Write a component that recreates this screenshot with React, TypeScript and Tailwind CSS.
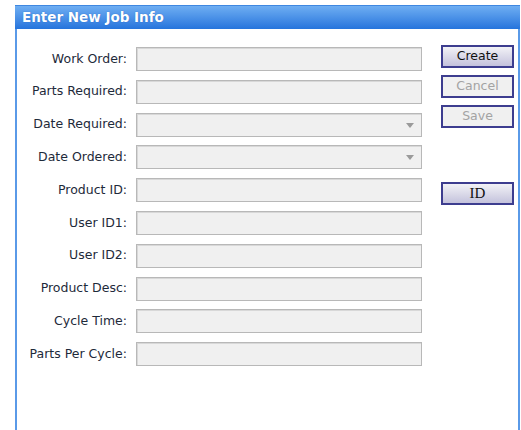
import React from 'react';

type Field = { label: string; dropdown?: boolean };

const fields: Field[] = [
  { label: 'Work Order:' },
  { label: 'Parts Required:' },
  { label: 'Date Required:', dropdown: true },
  { label: 'Date Ordered:', dropdown: true },
  { label: 'Product ID:' },
  { label: 'User ID1:' },
  { label: 'User ID2:' },
  { label: 'Product Desc:' },
  { label: 'Cycle Time:' },
  { label: 'Parts Per Cycle:' },
];

const font = { fontFamily: 'Tahoma, "DejaVu Sans", sans-serif' };

const FieldRow = ({ field }: { field: Field }) => (
  <div className="flex items-center h-[24px]">
    <label className="w-[113px] text-right text-[12.5px] text-[#1e2a3a] pr-[9px] whitespace-nowrap">
      {field.label}
    </label>
    <div className="relative w-[286px] h-[24px] bg-[#f0f0f0] border border-[#b8b8b8] shadow-[inset_1px_1px_0_#d8d8d8]">
      {field.dropdown && (
        <svg className="absolute right-[7px] top-[9px]" width="8" height="5" viewBox="0 0 8 5">
          <path d="M0 0h8L4 5z" fill="#9a9a9a" />
        </svg>
      )}
    </div>
  </div>
);

const Btn = ({ text, disabled, serif }: { text: string; disabled?: boolean; serif?: boolean }) => (
  <button
    className={`w-[73px] h-[23px] border-2 border-[#3d3d8f] text-[12.5px] leading-none ${
      disabled
        ? 'bg-[#f0f0f0] text-[#a3a3a3]'
        : 'bg-gradient-to-b from-[#f2f2f6] to-[#c4c2dc] text-[#111]'
    }`}
    style={serif ? { fontFamily: '"Liberation Serif", serif', fontSize: 15 } : undefined}
  >
    {text}
  </button>
);

export default function App() {
  return (
    <div className="w-[521px] h-[430px] bg-white overflow-hidden pt-[5px] pl-[15px]" style={font}>
      <div className="w-[505px] h-[440px] border-2 border-t-0 border-[#5a9ae8] flex flex-col">
        <div className="h-[24px] -mx-[2px] bg-gradient-to-b from-[#6eaef2] to-[#2574dc] border-t border-[#3f87e0] flex items-center pl-[7px]">
          <span className="text-white font-bold text-[13.5px] [text-shadow:0_0_1px_#1d5fb8]">Enter New Job Info</span>
        </div>
        <div className="flex pt-[18px]">
          <div className="flex flex-col gap-[8.8px] pl-[6px]">
            {fields.map((f) => (
              <FieldRow key={f.label} field={f} />
            ))}
          </div>
          <div className="flex flex-col pl-[19px] gap-[7px] -mt-[2px]">
            <Btn text="Create" />
            <Btn text="Cancel" disabled />
            <Btn text="Save" disabled />
            <div className="h-[40px]" />
            <Btn text="ID" serif />
          </div>
        </div>
      </div>
    </div>
  );
}
